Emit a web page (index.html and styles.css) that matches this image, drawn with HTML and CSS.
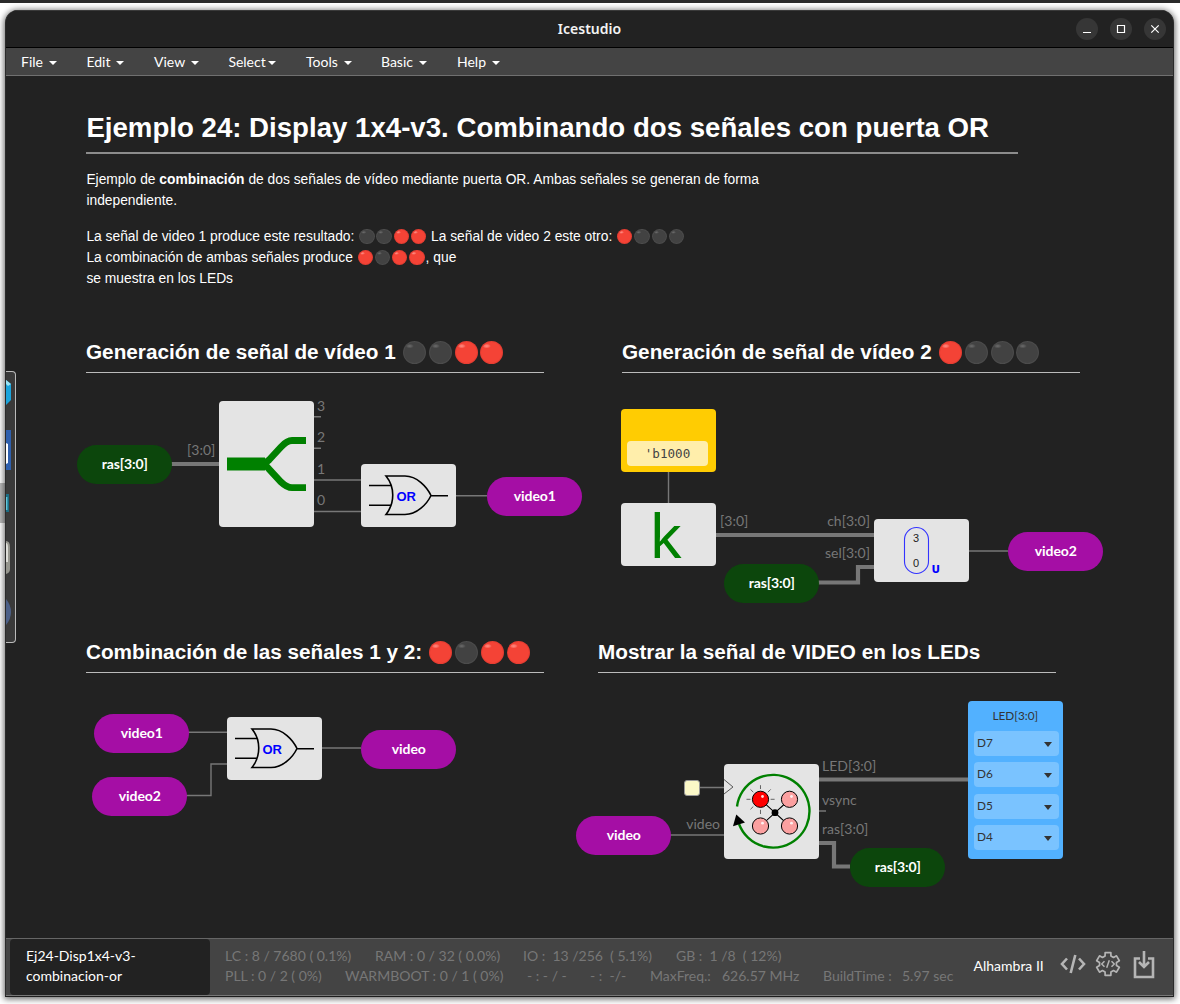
FILE: index.html
```html
<!DOCTYPE html>
<html lang="es">
<head>
<meta charset="utf-8">
<title>Icestudio</title>
<link rel="stylesheet" href="styles.css">
</head>
<body>
<div class="scroll-thumb"></div>
<main class="window">
  <header class="titlebar">
    <span class="app-title">Icestudio</span>
    <div class="controls">
      <svg viewBox="0 0 22 22"><circle cx="11" cy="11" r="11"/><path d="M7 14.5h8"/></svg>
      <svg viewBox="0 0 22 22"><circle cx="11" cy="11" r="11"/><path d="M7.5 7.5h7v7h-7z"/></svg>
      <svg viewBox="0 0 22 22"><circle cx="11" cy="11" r="11"/><path d="M7.3 7.3l7.4 7.4M14.7 7.3l-7.4 7.4"/></svg>
    </div>
  </header>
  <nav class="menu">
    <span class="item m-file">File</span><span class="item m-edit">Edit</span><span class="item m-view">View</span><span class="item m-select">Select</span><span class="item m-tools">Tools</span><span class="item m-basic">Basic</span><span class="item m-help">Help</span>
  </nav>
  <section class="canvas">
    <div class="scene">
      <svg class="wires" width="1180" height="1004">
        <g class="bus">
          <path d="M171 464H219M715 535H874M818 582.5H858V567H874M818 779.5H968M818 843H834V866.5H850"/>
        </g>
        <g class="wire">
          <path d="M313 416.7H321M313 448.2H321M313 480H361M313 511.5H361M455 495.7H487M668.5 472V503M968 551H1008M188 732.3H227M186 795.5H211V764H227M321 748H361M700 787.5H724M670 835H724M818 811H826"/>
        </g>
        <g class="port">
          <text x="187" y="455">[3:0]</text>
          <text x="317" y="411">3</text><text x="317" y="442">2</text><text x="317" y="474">1</text><text x="317" y="505">0</text>
          <text x="720" y="526">[3:0]</text>
          <text class="end" x="870" y="526">ch[3:0]</text>
          <text class="end" x="870" y="558">sel[3:0]</text>
          <text class="end" x="720" y="829">video</text>
          <text x="822" y="771">LED[3:0]</text>
          <text x="822" y="805">vsync</text>
          <text x="822" y="834">ras[3:0]</text>
        </g>
      </svg>

      <article class="note note-main">
        <h1>Ejemplo 24: Display 1x4-v3. Combinando dos señales con puerta OR</h1>
        <p>Ejemplo de <b>combinación</b> de dos señales de vídeo mediante puerta OR. Ambas señales se generan de forma<br>independiente.</p>
        <p>La señal de video 1 produce este resultado: <i class="led"></i><i class="led"></i><i class="led on"></i><i class="led on"></i> La señal de video 2 este otro: <i class="led on"></i><i class="led"></i><i class="led"></i><i class="led"></i><br>La combinación de ambas señales produce <i class="led on"></i><i class="led"></i><i class="led on"></i><i class="led on"></i>, que<br>se muestra en los LEDs</p>
      </article>
      <h2 class="note note-v1">Generación de señal de vídeo 1 <i class="led"></i><i class="led"></i><i class="led on"></i><i class="led on"></i></h2>
      <h2 class="note note-v2">Generación de señal de vídeo 2 <i class="led on"></i><i class="led"></i><i class="led"></i><i class="led"></i></h2>
      <h2 class="note note-mix">Combinación de las señales 1 y 2: <i class="led on"></i><i class="led"></i><i class="led on"></i><i class="led on"></i></h2>
      <h2 class="note note-leds">Mostrar la señal de VIDEO en los LEDs</h2>

      <div class="label input ras-a">ras[3:0]</div>
      <div class="label output video1-a">video1</div>
      <div class="label input ras-b">ras[3:0]</div>
      <div class="label output video2-a">video2</div>
      <div class="label output video1-b">video1</div>
      <div class="label output video2-b">video2</div>
      <div class="label output video-a">video</div>
      <div class="label output video-b">video</div>
      <div class="label input ras-c">ras[3:0]</div>

      <div class="block splitter">
        <svg viewBox="0 0 94.6 126">
          <path class="trunk" d="M8 63H46"/>
          <path class="arm" d="M43 63Q47 62 50 59L62 46Q68 39.5 73 39.5H87M43 63Q47 64 50 68L62 81Q68 86.7 73 86.7H87"/>
        </svg>
      </div>
      <div class="block or-a">
        <svg viewBox="0 0 94.6 63">
          <path class="gate" d="M8 21.5H30M8 41.3H30M25 12H44C56 12 66 23 70 31.5C66 40 56 50.5 44 50.5H25C34 39 34 23 25 12ZM70 31.7H87"/>
          <text x="35.5" y="36.8">OR</text>
        </svg>
      </div>
      <div class="block or-b">
        <svg viewBox="0 0 94.6 63">
          <path class="gate" d="M8 21.5H30M8 41.3H30M25 12H44C56 12 66 23 70 31.5C66 40 56 50.5 44 50.5H25C34 39 34 23 25 12ZM70 31.7H87"/>
          <text x="35.5" y="36.8">OR</text>
        </svg>
      </div>
      <div class="constant"><span>'b1000</span></div>
      <div class="block kblock"><svg viewBox="0 0 94.6 63"><text class="k" x="28.6" y="55">k</text></svg></div>
      <div class="block mux">
        <svg viewBox="0 0 94.6 63">
          <rect x="30.5" y="8.5" width="24" height="46" rx="12"/>
          <text class="idx" x="42" y="23">3</text><text class="idx" x="42" y="48">0</text>
          <text class="u" x="57.5" y="54">U</text>
        </svg>
      </div>
      <div class="clock"></div>
      <div class="block display">
        <svg viewBox="0 0 94.6 95">
          <path class="clk" d="M0 15.5L9 23L0 30"/>
          <path class="ring" d="M13 42.5A36.4 36.4 0 1 1 15 60"/>
          <path class="tip" d="M12.3 50.5L21 58.5L9 62.2Z"/>
          <path class="link" d="M36.5 35.5L65.5 62M65.5 35.5L36.5 62"/>
          <circle cx="51" cy="48.7" r="3.4"/>
          <path class="ray" d="M36.5 21.2V25M36.5 45.8V50M22.5 35.3H26.5M46.6 35.3H50.6M26.5 25.4L29.3 28.2M46.7 25.4L43.9 28.2M26.5 45.3L29.3 42.5"/>
          <circle class="lamp lit" cx="36.5" cy="35.3" r="8.1"/>
          <circle class="lamp" cx="65.5" cy="35.3" r="8.1"/>
          <circle class="lamp" cx="36.5" cy="62" r="8.1"/>
          <circle class="lamp" cx="65.5" cy="62" r="8.1"/>
          <g class="shine"><circle cx="38.5" cy="32.5" r="1.4"/><circle cx="67.5" cy="32.5" r="1.4"/><circle cx="38.5" cy="59.2" r="1.4"/><circle cx="67.5" cy="59.2" r="1.4"/></g>
        </svg>
      </div>
      <div class="pins">
        <div class="name">LED[3:0]</div>
        <div class="pin">D7</div><div class="pin">D6</div><div class="pin">D5</div><div class="pin">D4</div>
      </div>
    </div>
    <aside class="dock">
      <svg width="10" height="270" viewBox="0 0 10 270">
        <path fill="#1ba4dc" d="M0 8L5 12V28L0 33Z"/><path fill="#9be4f5" d="M0 8L5 12L2 14L0 12Z"/>
        <path fill="#2f60ae" d="M0 58H5V98H0Z"/><path fill="#fff" d="M0 71L2 72V91L0 92Z"/>
        <path fill="#1c6d84" d="M0 122H3V140H0Z"/><path fill="#62c8dd" d="M0 125H1.4V138H0Z"/>
        <path fill="#96968e" d="M0 169Q4 169 4 175V197Q4 201 0 202Z"/><path fill="#deded8" d="M0 171Q2 171 2 176V190H0Z"/>
        <path fill="#4c6088" d="M0 227Q5 233 5 240Q5 247 0 253Z"/>
      </svg>
    </aside>
  </section>
  <footer class="status">
    <div class="tab">Ej24-Disp1x4-v3-<br>combinacion-or</div>
    <div class="stats">
      <div class="row r1"><span>LC : 8 / 7680 ( 0.1%)</span><span>RAM : 0 / 32 ( 0.0%)</span><span>IO :&nbsp; 13 /256&nbsp; ( 5.1%)</span><span>GB :&nbsp; 1 /8&nbsp; ( 12%)</span></div>
      <div class="row r2"><span>PLL : 0 / 2 ( 0%)</span><span>WARMBOOT : 0 / 1 ( 0%)</span><span>- : - / -</span><span>- :&nbsp; -/-</span><span>MaxFreq.:</span><span>626.57 MHz</span><span>BuildTime :</span><span>5.97 sec</span></div>
    </div>
    <div class="board">Alhambra II</div>
    <div class="tools">
      <svg width="26" height="24" viewBox="0 0 26 24"><path d="M7 6.5L2 12L7 17.5M19 6.5L24 12L19 17.5M15.3 3L10.7 21" stroke-width="2.6"/></svg>
      <svg width="26" height="26" viewBox="0 0 26 26" stroke-linejoin="round"><path d="M10.06 4.92L10.15 1.55H15.85L15.94 4.92L18.53 6.41L21.49 4.8L24.34 9.75L21.47 11.51V14.49L24.34 16.25L21.49 21.2L18.53 19.59L15.94 21.08L15.85 24.45H10.15L10.06 21.08L7.47 19.59L4.51 21.2L1.66 16.25L4.53 14.49V11.51L1.66 9.75L4.51 4.8L7.47 6.41Z" stroke-width="1.7"/><path d="M9.5 10.2L6.7 13L9.5 15.8M16.5 10.2L19.3 13L16.5 15.8M14.3 9.3L11.7 16.7" stroke-width="1.5"/></svg>
      <svg width="22" height="29" viewBox="0 0 22 29"><path d="M7 8.5H2V27H20V8.5H15" stroke-width="2.6"/><path d="M11 1V16M6 12L11 17L16 12" stroke-width="2.6"/></svg>
    </div>
  </footer>
</main>
</body>
</html>
```
FILE: styles.css
```css
* { box-sizing: border-box; }
body {
  margin: 0;
  height: 1004px;
  overflow: hidden;
  position: relative;
  padding: 7px 6px 7px 5px;
  background: #fff;
  border-top: 3px solid #2a2a2a;
  font: 14px/20px Lato, sans-serif;
}
.scroll-thumb {
  position: absolute;
  left: 0;
  top: 480px;
  width: 5px;
  height: 40px;
  background: #bbb;
}
.window {
  position: relative;
  display: flex;
  flex-direction: column;
  height: 987px;
  overflow: hidden;
  border-radius: 13px 13px 0 0;
  background: #222;
  border-left: 1px solid #2b2b2b;
  border-right: 1px solid #2b2b2b;
  border-bottom: 1px solid #1d1d1d;
  box-shadow: 0 1px 6px 1px rgba(0, 0, 0, .6);
}
.titlebar {
  position: relative;
  display: flex;
  flex: 0 0 38px;
  align-items: center;
  justify-content: center;
  border-top: 1px solid #3a3a3a;
  border-bottom: 1px solid #000;
}
.app-title { color: #f4f4f4; font: 600 14px/20px "Noto Sans", sans-serif; }
.controls { position: absolute; right: 7px; top: 7px; display: flex; gap: 12px; }
.controls svg { width: 22px; height: 22px; }
.controls circle { fill: #363636; }
.controls path { fill: none; stroke: #fff; stroke-width: 1.2; }

.menu {
  display: flex;
  flex: 0 0 28px;
  padding-left: 15px;
  background: #444;
  border-bottom: 1px solid #707070;
  color: #fff;
}
.item { height: 27px; line-height: 28px; }
.item::after {
  content: "";
  display: inline-block;
  margin-left: 6px;
  vertical-align: 2px;
  border: 4px solid transparent;
  border-top-color: #fff;
  border-bottom: 0;
}
.m-file { width: 65.4px; }
.m-edit { width: 67.6px; }
.m-view { width: 74.4px; }
.m-select { width: 77.6px; }
.m-select::after { margin-left: 2.4px; }
.m-tools { width: 75px; }
.m-basic { width: 76px; }

.canvas { position: relative; flex: 1; overflow: hidden; }
.scene { position: absolute; left: -6px; top: -76px; width: 1180px; height: 1004px; }
.wires { position: absolute; left: 0; top: 0; }
.bus { fill: none; stroke: #777; stroke-width: 4.2; }
.wire { fill: none; stroke: #777; stroke-width: 1.4; }
.port { fill: #777; font-size: 14px; }
.end { text-anchor: end; }

.note { position: absolute; color: #fff; font-family: "Liberation Sans", Arial, sans-serif; }
.note-main { left: 86.4px; top: 107px; width: 932px; font-size: 13.82px; line-height: 21px; }
.note p { margin: 0 0 15px; }
h1 {
  margin: 0 0 15px;
  height: 47px;
  border-bottom: 2px solid #8c8c8c;
  font-size: 27.63px;
  line-height: 42px;
  white-space: nowrap;
}
h2 {
  margin: 0;
  width: 458px;
  height: 35px;
  border-bottom: 1px solid #bbb;
  font-size: 20.73px;
  line-height: 28px;
  white-space: nowrap;
}
.note-v1 { left: 86px; top: 338px; }
.note-v2 { left: 622px; top: 338px; }
.note-mix { left: 86px; top: 638px; }
.note-leds { left: 598px; top: 638px; }
.led {
  display: inline-block;
  width: 1.11em;
  height: 1.11em;
  margin: 0 .069em;
  vertical-align: -.22em;
  border-radius: 50%;
  background: radial-gradient(ellipse 18% 10% at 29% 22%, #6c6c6c 0, #555 60%, transparent 100%), #424242;
  box-shadow: inset 0 0 0 1px #4c4c4c;
}
.led.on {
  background: radial-gradient(ellipse 18% 10% at 29% 22%, #ff8d84 0, #fb6a5f 60%, transparent 100%), #f44336;
  box-shadow: inset 0 0 0 1px #e63d32;
}

.label {
  position: absolute;
  width: 94.6px;
  height: 39.4px;
  padding-left: 1px;
  border-radius: 20px;
  color: #fff;
  font-weight: 700;
  letter-spacing: -.1px;
  line-height: 38px;
  text-align: center;
}
.input { background: #0c460c; }
.output { background: #a50ea5; }
.ras-a { left: 77px; top: 445px; }
.video1-a { left: 487px; top: 477px; }
.ras-b { left: 724px; top: 564px; }
.video2-a { left: 1008px; top: 532px; }
.video1-b { left: 94px; top: 714px; }
.video2-b { left: 92px; top: 777px; }
.video-a { left: 361px; top: 730px; }
.video-b { left: 576px; top: 816px; }
.ras-c { left: 850px; top: 848px; }

.block { position: absolute; width: 94.6px; height: 63px; border-radius: 4px; background: #e4e4e4; }
.block svg { display: block; width: 100%; height: 100%; overflow: visible; }
.splitter { left: 219px; top: 401px; height: 126px; }
.trunk { fill: none; stroke: green; stroke-width: 13; }
.arm { fill: none; stroke: green; stroke-width: 6.8; }
.or-a { left: 361px; top: 464px; }
.or-b { left: 227px; top: 717px; }
.gate { fill: none; stroke: #000; stroke-width: 1.6; }
.block text { fill: #00f; font: 700 13px "Liberation Sans", sans-serif; }
.kblock { left: 621px; top: 503px; }
.block .k { fill: green; font: 400 61px "Noto Sans", sans-serif; }
.mux { left: 874px; top: 519px; }
.mux rect { fill: none; stroke: #33f; stroke-width: 1.1; }
.block .idx { fill: #222; font: 400 11px "Liberation Sans", sans-serif; text-anchor: middle; }
.block .u { font: 700 10.5px "DejaVu Sans", sans-serif; }
.display { left: 724px; top: 764px; height: 95px; }
.clk { fill: none; stroke: #555; }
.ring { fill: none; stroke: green; stroke-width: 2.4; }
.link { stroke: #000; stroke-width: 1.1; }
.ray { fill: none; stroke: #444; stroke-width: .8; }
.lamp { fill: #fba0a0; stroke: #000; stroke-width: 1; }
.lit { fill: #f00; }
.shine { fill: #fff; opacity: .85; }
.clock {
  position: absolute;
  left: 683.5px;
  top: 779.5px;
  width: 16.5px;
  height: 16.5px;
  border: 1px solid #999;
  border-radius: 3px;
  background: #fbf8c8;
}
.constant {
  position: absolute;
  left: 621px;
  top: 409px;
  width: 94.6px;
  height: 63px;
  padding: 31.5px 7.6px 6px 6px;
  border-radius: 4px;
  background: #ffcc02;
}
.constant span {
  display: block;
  height: 25.5px;
  border-radius: 4px;
  background: #ffeeab;
  color: #444;
  font: 12.6px/26px "DejaVu Sans Mono", monospace;
  text-align: center;
}
.pins {
  position: absolute;
  left: 968px;
  top: 701px;
  display: flex;
  flex-direction: column;
  gap: 6.2px;
  width: 94.6px;
  height: 158px;
  padding: 0 4px 0 6px;
  border-radius: 4px;
  background: #52b1ff;
  color: #333;
  font-size: 11.8px;
}
.name { height: 23.5px; padding-right: 2px; line-height: 29px; text-align: center; }
.pin {
  display: flex;
  justify-content: space-between;
  height: 25.3px;
  padding: 0 7px 0 3px;
  border-radius: 4px;
  background: #7ac3ff;
  line-height: 23px;
}
.pin::after {
  content: "";
  margin-top: 11px;
  height: 0;
  border: 4px solid transparent;
  border-top: 5px solid #333;
  border-bottom: 0;
}

.dock {
  position: absolute;
  left: 0;
  top: 295px;
  width: 10px;
  height: 272px;
  overflow: hidden;
  border: 1px solid #bbb;
  border-left: 0;
  border-radius: 0 4px 4px 0;
  background: #3a3a3a;
}

.status {
  display: flex;
  flex: 0 0 58px;
  padding: 0 18px 0 4px;
  background: #444;
  border-top: 1px solid #666;
  border-bottom: 1px solid #777;
}
.tab {
  flex: 0 0 200px;
  padding: 7px 16px;
  border-radius: 4px;
  background: #222;
  color: #fff;
}
.stats { flex: 0 0 749px; padding: 7px 0 0 15px; color: #777; }
.row { display: flex; white-space: nowrap; }
.row span { flex: none; }
.r1 span:nth-child(1) { width: 150px; }
.r1 span:nth-child(2) { width: 148px; }
.r1 span:nth-child(3) { width: 153px; }
.r2 span:nth-child(1) { width: 120px; }
.r2 span:nth-child(2) { width: 182px; }
.r2 span:nth-child(3) { width: 63px; }
.r2 span:nth-child(4) { width: 60px; }
.r2 span:nth-child(5) { width: 72px; }
.r2 span:nth-child(6) { width: 101px; }
.r2 span:nth-child(7) { width: 79px; }
.board { flex: 1; padding-left: 14.5px; color: #fff; line-height: 54px; }
.tools { display: flex; align-items: center; gap: 9px; height: 50px; }
.tools svg { fill: none; stroke: #b5b5b5; }
.tools svg:last-child { margin-left: 3px; }
```
